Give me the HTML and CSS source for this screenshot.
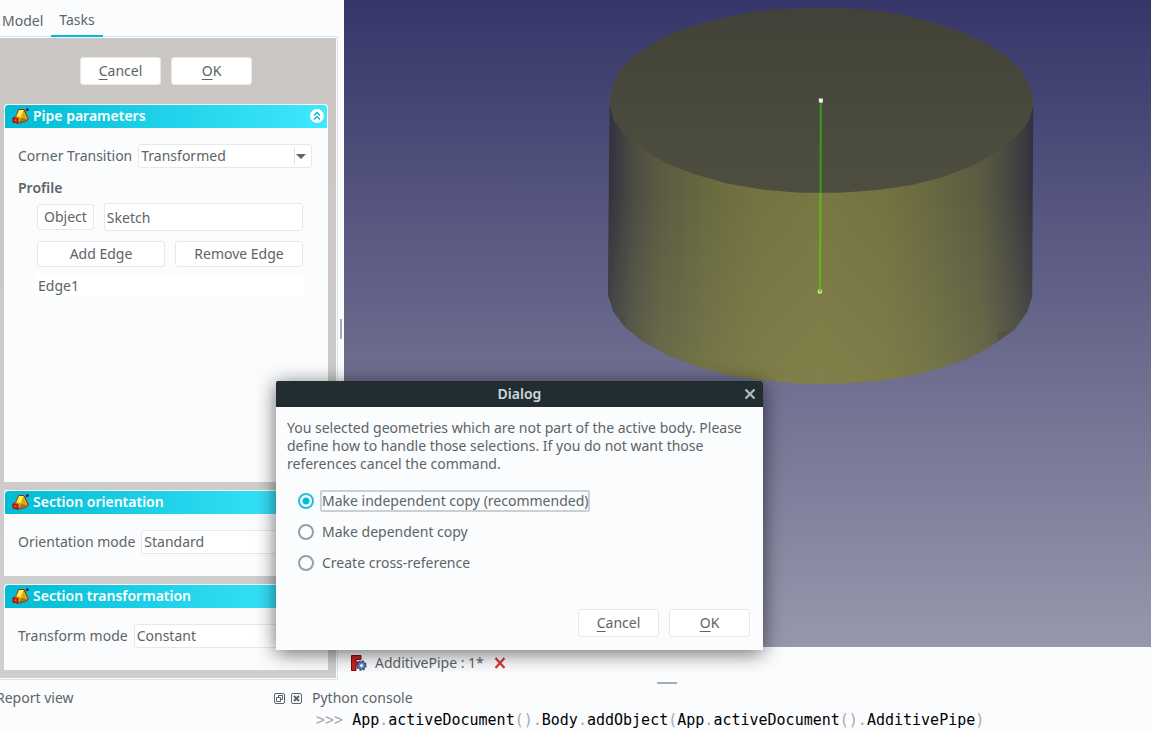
FILE: index.html
```html
<!DOCTYPE html>
<html lang="en">
<head>
<meta charset="utf-8">
<title>AdditivePipe</title>
<link rel="stylesheet" href="styles.css">
</head>
<body>
<svg class="defs" aria-hidden="true">
  <symbol id="pipe" viewBox="0 0 17 16">
    <path d="M13.2 3.6L15.6 1" stroke="#7d1a1a" stroke-width="1"/>
    <circle cx="15.4" cy="1.6" r="1.4" fill="#4a1c20"/>
    <path d="M4.5 7L6.6 1.6L12 1.6L16.2 10.6L14.8 12.6L6.5 15.2L1.2 14L1 10.6Z" fill="#d19a10" stroke="#9c1c14" stroke-width="1"/>
    <path d="M4.4 8L7 2L11.8 2L8.8 9.4Z" fill="#ffec4a"/>
    <path d="M8.8 9.4L11.8 2.6L15.4 10.4L7 14Z" fill="#d9a81a"/>
    <path d="M9.4 10L15 11L7 14.6Z" fill="#a87409"/>
    <path d="M1 9.8L6 10.4L6 15L1.2 14.2Z" fill="#d91c14" stroke="#7b100c" stroke-width=".8"/>
    <path d="M2.2 11.4H4.4V13.2H2.4Z" fill="#f2562c"/>
  </symbol>
</svg>
<div class="app">
  <main class="workspace">
    <aside class="dock">
      <div class="dock-tabs" role="tablist">
        <button class="dock-tab" role="tab">Model</button>
        <button class="dock-tab active" role="tab" aria-selected="true">Tasks</button>
      </div>
      <div class="tasks">
        <div class="task-actions">
          <button class="btn wide"><u>C</u>ancel</button>
          <button class="btn wide"><u>O</u>K</button>
        </div>
        <section class="panel grow">
          <header class="panel-head">
            <svg class="panel-icon"><use href="#pipe"/></svg>
            <h2>Pipe parameters</h2>
            <button class="collapse" aria-label="Collapse">
              <svg viewBox="0 0 14 14"><path d="M4 6.5L7 3.5L10 6.5M4 10.5L7 7.5L10 10.5" fill="none" stroke="#00b8d4" stroke-width="1.5"/></svg>
            </button>
          </header>
          <div class="panel-body">
            <div class="field">
              <label for="corner">Corner Transition</label>
              <span class="combo">
                <select id="corner"><option>Transformed</option></select>
                <svg class="combo-arrow" viewBox="0 0 18 16"><path d="M.5 0V16" stroke="#dfe2e3"/><path d="M2 6H12L7 11Z" fill="#5c6567"/></svg>
              </span>
            </div>
            <h3>Profile</h3>
            <div class="profile">
              <div class="pick">
                <button class="btn">Object</button>
                <input type="text" value="Sketch" aria-label="Profile object">
              </div>
              <div class="edges">
                <button class="btn">Add Edge</button>
                <button class="btn">Remove Edge</button>
              </div>
              <ul class="edge-list"><li>Edge1</li></ul>
            </div>
          </div>
        </section>
        <section class="panel">
          <header class="panel-head">
            <svg class="panel-icon"><use href="#pipe"/></svg>
            <h2>Section orientation</h2>
          </header>
          <div class="panel-body">
            <div class="field">
              <label for="orient">Orientation mode</label>
              <span class="combo"><select id="orient"><option>Standard</option></select></span>
            </div>
          </div>
        </section>
        <section class="panel">
          <header class="panel-head">
            <svg class="panel-icon"><use href="#pipe"/></svg>
            <h2>Section transformation</h2>
          </header>
          <div class="panel-body">
            <div class="field">
              <label for="transform">Transform mode</label>
              <span class="combo"><select id="transform"><option>Constant</option></select></span>
            </div>
          </div>
        </section>
      </div>
    </aside>
    <div class="splitter"><i></i></div>
    <div class="document">
      <div class="view">
        <svg class="scene" viewBox="0 0 807 648" preserveAspectRatio="xMidYMin meet">
          <defs>
            <linearGradient id="side">
              <stop offset="0" stop-color="#31313d"/>
              <stop offset=".02" stop-color="#3a3a40"/>
              <stop offset=".06" stop-color="#4b4b43"/>
              <stop offset=".12" stop-color="#5a5a43"/>
              <stop offset=".23" stop-color="#686940"/>
              <stop offset=".35" stop-color="#747240"/>
              <stop offset=".5" stop-color="#787642"/>
              <stop offset=".65" stop-color="#747240"/>
              <stop offset=".76" stop-color="#686940"/>
              <stop offset=".88" stop-color="#5a5a42"/>
              <stop offset=".94" stop-color="#484842"/>
              <stop offset=".98" stop-color="#3a3a40"/>
              <stop offset="1" stop-color="#31313d"/>
            </linearGradient>
            <linearGradient id="lift" x2="0" y2="1">
              <stop offset=".3" stop-color="#9c9c70" stop-opacity="0"/>
              <stop offset="1" stop-color="#9c9c60" stop-opacity=".25"/>
            </linearGradient>
            <linearGradient id="cap" x2="0" y2="1">
              <stop offset="0" stop-color="#434238"/>
              <stop offset="1" stop-color="#4e4e40"/>
            </linearGradient>
            <path id="body" d="M58 313L53 887L70 937L103 982L157 1026L230 1066L315 1100L415 1128L520 1143L630 1153H750L865 1145L970 1128L1065 1103L1150 1071L1220 1030L1275 990L1312 940L1328 892L1331 320Z"/>
          </defs>
          <g transform="translate(246 0) scale(.3333)">
            <use href="#body" fill="url(#side)"/>
            <use href="#body" fill="url(#lift)"/>
            <path d="M70 937L104 952V982Z" fill="#4b4b48"/>
            <path d="M1275 990L1226 999L1223 1027Z" fill="#55543f"/>
            <path d="M58 313L62 265L90 210L135 165L197 124L275 88L365 62L460 41L565 28L690 23L820 28L925 43L1025 66L1115 96L1190 130L1252 170L1297 213L1325 265L1331 320L1316 366L1282 410L1225 455L1155 495L1070 529L970 555L865 571L750 579H630L520 570L415 552L315 524L230 491L157 449L103 403L70 360Z" fill="url(#cap)"/>
            <path d="M693 305L692 579" stroke="#3a9a1a" stroke-width="6"/>
            <path d="M692 579L690 873" stroke="#55bd15" stroke-width="6"/>
            <path d="M687 296H699V308H687Z" fill="#f3f1ec"/>
            <path d="M684 870H696V882H684Z" fill="#d9dba0"/>
            <path d="M688 868H693V877H688Z" fill="#55bd15"/>
          </g>
        </svg>
      </div>
      <div class="doc-tabs">
        <svg class="doc-icon" viewBox="0 0 16 16">
          <path d="M.5 .5H10V4.5H5V7H8V10.5H5V15.5H.5Z" fill="#d01f1f" stroke="#7c0c0c"/>
          <circle cx="10.5" cy="10.5" r="4.2" fill="#5d7fb5" stroke="#304a78" stroke-width="2" stroke-dasharray="1.8 1.5"/>
          <circle cx="10.5" cy="10.5" r="3.8" fill="#6788bb" stroke="#3c5a8c" stroke-width=".8"/>
          <circle cx="10.5" cy="10.5" r="1.5" fill="#fbfcfe"/>
        </svg>
        <span>AdditivePipe : 1*</span>
        <button class="doc-close" aria-label="Close document">
          <svg viewBox="0 0 12 12"><path d="M1.5 1L10.5 11M10.5 1L1.5 11" stroke="#d9373a" stroke-width="2.2"/></svg>
        </button>
      </div>
    </div>
  </main>
  <footer class="bottom">
    <section class="report">
      <h2>Report view</h2>
      <button class="mini" aria-label="Float"><svg viewBox="0 0 11 11"><rect x=".5" y=".5" width="10" height="10" rx="1.5"/><path d="M4.5 5V2.5H8.5V6.5H6.5M2.5 4.5H6.5V8.5H2.5Z"/></svg></button>
      <button class="mini" aria-label="Close"><svg viewBox="0 0 11 11"><rect x=".5" y=".5" width="10" height="10" rx="1.5"/><path d="M3 3L8 8M8 3L3 8" stroke-width="2"/></svg></button>
    </section>
    <section class="console">
      <div class="grip"></div>
      <h2>Python console</h2>
      <code><s>&gt;&gt;&gt; </s>App<s>.</s>activeDocument<s>().</s>Body<s>.</s>addObject<s>(</s>App<s>.</s>activeDocument<s>().</s>AdditivePipe<s>)</s></code>
    </section>
  </footer>
  <div class="dialog" role="dialog" aria-labelledby="dialog-title">
    <header class="dialog-head">
      <h1 id="dialog-title">Dialog</h1>
      <button class="dialog-close" aria-label="Close dialog"><svg viewBox="0 0 12 12"><path d="M1.5 1.5L10.5 10.5M10.5 1.5L1.5 10.5" stroke="#b4babc" stroke-width="2.2"/></svg></button>
    </header>
    <div class="dialog-body">
      <p>You selected geometries which are not part of the active body. Please define how to handle those selections. If you do not want those references cancel the command.</p>
      <div class="choices">
        <label><input type="radio" name="copy" checked><span class="focused">Make independent copy (recommended)</span></label>
        <label><input type="radio" name="copy"><span>Make dependent copy</span></label>
        <label><input type="radio" name="copy"><span>Create cross-reference</span></label>
      </div>
      <div class="dialog-actions">
        <button class="btn wide"><u>C</u>ancel</button>
        <button class="btn wide"><u>O</u>K</button>
      </div>
    </div>
  </div>
</div>
</body>
</html>
```
FILE: styles.css
```css
* { box-sizing: border-box; }
body {
  margin: 0;
  background: #fbfcfe;
  color: #5c6467;
  font: 14px/18px "Noto Sans", sans-serif;
}
h1, h2, h3, p, ul { margin: 0; padding: 0; font-size: 14px; list-style: none; }
button, select, input { font: inherit; color: inherit; margin: 0; }
button { padding: 0; border: 0; background: none; }
svg { display: block; }
u { text-underline-offset: 3px; }
s { color: #a9a9ad; text-decoration: none; }
.defs { position: absolute; width: 0; height: 0; }

.app { position: relative; display: flex; flex-direction: column; height: 100vh; overflow: hidden; }
.workspace { display: flex; flex: 1; min-height: 0; }

.dock { display: flex; flex-direction: column; width: 338px; }
.dock-tabs { position: relative; z-index: 1; display: flex; height: 37px; }
.dock-tab { padding: 4px 8px 0 2px; }
.dock-tab.active { padding: 4px 8px 0; border-bottom: 2px solid #00bcd4; }
.tasks {
  display: flex;
  flex: 1;
  flex-direction: column;
  gap: 8px;
  padding: 19px 8px 8px 4px;
  border: solid #fbfcfe;
  border-width: 1px 1px 1px 0;
  outline: 1px solid #dfe2e3;
  margin-right: 1px;
  background: linear-gradient(#cac6c4, #cfcfcf);
}
.task-actions { display: flex; justify-content: center; gap: 10px; padding-bottom: 11px; }

.btn {
  height: 26px;
  padding: 0 6px;
  border: 1px solid #e6e8e9;
  border-radius: 3px;
  background: #fff;
}
.btn.wide { width: 81px; height: 28px; }

.panel { background: #fbfcfe; border-radius: 4px 4px 0 0; }
.panel.grow { flex: 1; }
.panel-head {
  display: flex;
  align-items: center;
  height: 25px;
  padding: 0 3px 1px 7px;
  border: 1px solid #fff;
  border-radius: 4px 4px 0 0;
  background: linear-gradient(90deg, #00bcd4, #3fe8ff);
  color: #fff;
}
.panel-icon { width: 17px; height: 16px; margin-right: 4px; }
.panel-head h2 { flex: 1; font-weight: 600; }
.collapse { width: 14px; height: 14px; border-radius: 50%; background: #fff; }
.panel-body { padding: 15px 16px 22px 14px; }

.field { display: flex; align-items: center; gap: 6px; }
.combo { position: relative; flex: 1; }
select {
  display: block;
  width: 100%;
  height: 24px;
  padding: 0 2px;
  border: 1px solid #e6e8e9;
  border-radius: 3px;
  background: #fff;
  appearance: none;
}
.combo-arrow { position: absolute; right: 0; top: 4px; width: 18px; height: 16px; pointer-events: none; }
.panel-body h3 { padding: 11px 0 6px; font-weight: 600; }
.profile { display: flex; flex-direction: column; gap: 10px; padding: 0 9px 0 19px; }
.pick { display: flex; align-items: center; gap: 10px; }
.pick input { flex: 1; min-width: 0; height: 28px; padding: 0 2px; border: 1px solid #e6e8e9; border-radius: 3px; background: #fff; }
.edges { display: grid; grid-template-columns: 1fr 1fr; gap: 10px; }
.edge-list { margin: -3px -2px 0; padding: 3px 3px 2px; background: #fff; }

.splitter { display: flex; align-items: center; width: 6px; padding: 0 2px 22px; }
.splitter i { width: 2px; height: 20px; background: #a8acae; }

.document { display: flex; flex: 1; flex-direction: column; min-width: 0; }
.view { flex: 1; min-height: 0; background: linear-gradient(#36366a, #9797ac); }
.scene { width: 100%; height: 100%; }
.doc-tabs { display: flex; align-items: center; height: 32px; padding: 0 7px; }
.doc-icon { width: 16px; height: 16px; margin-right: 8px; }
.doc-close { width: 12px; height: 12px; margin-left: 10px; }

.bottom { display: flex; height: 51px; }
.bottom h2 { font-weight: 400; }
.report { display: flex; align-items: flex-start; gap: 6px; width: 302px; padding-top: 10px; }
.report h2 { flex: 1; margin-left: -4px; }
.mini { padding-top: 4px; }
.mini svg { width: 11px; height: 11px; fill: none; stroke: #5c6467; }
.console { display: flex; flex: 1; flex-direction: column; min-width: 0; padding-left: 10px; }
.grip { flex: none; width: 20px; height: 2px; margin: 3px 0 5px 345px; background: #a8acae; }
.console code { padding: 4px 4px 0; color: #000; font: 15px/18px "DejaVu Sans Mono", monospace; white-space: pre; }

.dialog {
  position: absolute;
  left: 276px;
  top: 381px;
  width: 487px;
  border-radius: 2px 2px 0 0;
  background: #fbfcfe;
  box-shadow: 0 3px 20px rgba(0, 0, 0, .6);
}
.dialog-head { display: flex; align-items: center; height: 26px; padding: 0 7px 0 19px; border-radius: 2px 2px 0 0; background: #222d32; color: #cfd8dc; }
.dialog-head h1 { flex: 1; font-weight: 600; text-align: center; }
.dialog-close { width: 12px; height: 12px; }
.dialog-body { padding: 12px 13px 13px 11px; }
.choices { display: flex; flex-direction: column; gap: 9px; padding: 17px 11px 35px; }
.choices label { display: flex; align-items: center; gap: 6px; }
.choices span { border: 2px solid transparent; line-height: 18px; }
.choices .focused { border-color: #cdd0d2; border-radius: 2px; }
.choices input {
  width: 16px;
  height: 16px;
  margin: 0;
  border: 2px solid #9a9fa1;
  border-radius: 50%;
  appearance: none;
}
.choices input:checked { border-color: #26c0d6; background: radial-gradient(circle, #00bcd4 3px, transparent 4px); }
.dialog-actions { display: flex; justify-content: flex-end; gap: 10px; }
```
